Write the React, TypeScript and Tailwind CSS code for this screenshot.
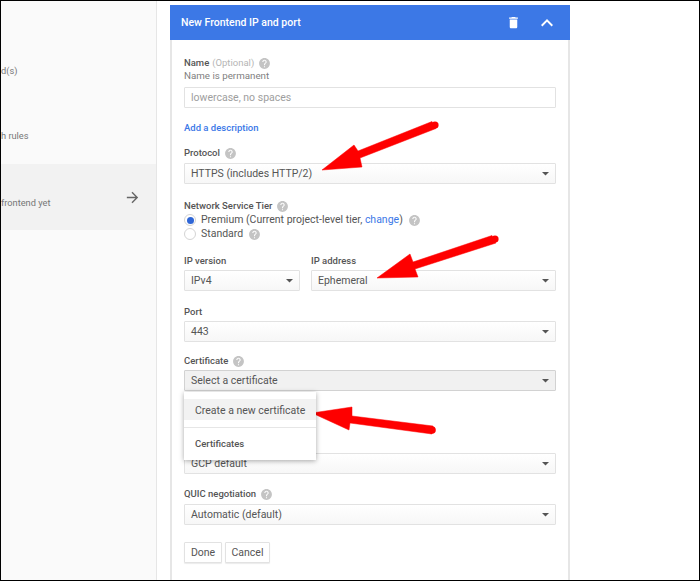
import type { ReactNode } from "react";
import { MdArrowForward, MdDelete, MdExpandLess, MdHelp } from "react-icons/md";

function Help({ className = "" }: { className?: string }) {
  return <MdHelp className={`inline-block h-[13px] w-[13px] shrink-0 text-[#c4c4c4] ${className}`} />;
}

function Label({ children, help, className = "" }: { children: ReactNode; help?: boolean; className?: string }) {
  return (
    <div className={`flex h-[14px] items-center pt-[2px] text-[9.5px] font-medium text-[#555] ${className}`}>
      {children}
      {help && <Help className="ml-[4px]" />}
    </div>
  );
}

function Select({ value, className = "", active }: { value: string; className?: string; active?: boolean }) {
  return (
    <div
      className={`flex h-[21px] items-center justify-between rounded-[1px] border pl-[6px] pr-[6px] text-[10.5px] text-[#555] ${
        active
          ? "border-[#d2d2d2] bg-[#f1f1f1]"
          : "border-[#e2e2e2] bg-gradient-to-b from-white to-[#f7f7f7]"
      } ${className}`}
    >
      <span>{value}</span>
      <svg width="7" height="4" viewBox="0 0 7 4" className="shrink-0">
        <path d="M0 0h7L3.5 3.5z" fill="#555" />
      </svg>
    </div>
  );
}

function Radio({ checked }: { checked?: boolean }) {
  return (
    <span className="mr-[5px] flex h-[12px] w-[12px] shrink-0 items-center justify-center rounded-full border border-[#d4d4d4] bg-white">
      {checked && <span className="h-[7px] w-[7px] rounded-full bg-[#2f66d6]" />}
    </span>
  );
}

function Arrows() {
  return (
    <svg width="700" height="581" className="pointer-events-none absolute -left-px -top-px">
      <g fill="#fe0000" stroke="#fe0000" strokeLinejoin="round">
        <polygon points="322,170 354,145 358,151 432,121.5 436,128.5 360,158 362,167" strokeWidth="0.5" />
        <circle cx="435" cy="125" r="3.6" strokeWidth="0" />
        <polygon points="377,278 410,254 413,262 492,235.5 496,243 415,269 418,277" strokeWidth="0.5" />
        <circle cx="495" cy="239" r="3.6" strokeWidth="0" />
        <polygon points="312,413 352,407 352,416 433,426 432,434 350,423 349,430" strokeWidth="0.5" />
        <circle cx="432" cy="430" r="3.8" strokeWidth="0" />
      </g>
    </svg>
  );
}

export default function App() {
  return (
    <div
      className="relative flex h-[581px] w-[700px] overflow-hidden border-t border-l border-b-[1.5px] border-r-[1.5px] border-black bg-white"
      style={{ fontFamily: "Roboto, 'Liberation Sans', sans-serif" }}
    >
      <aside className="flex w-[156px] shrink-0 flex-col border-r border-[#e6e6e6] bg-[#fafafa] text-[9.25px] text-[#777]">
        <div className="mt-[63px] flex h-[14px] items-center">d(s)</div>
        <div className="mt-[51px] flex h-[14px] items-center">h rules</div>
        <div className="mt-[21px] flex h-[66px] items-start justify-between bg-[#f2f2f2] pr-[15px]">
          <span className="mt-[32px] leading-[14px]">frontend yet</span>
          <MdArrowForward className="mt-[25px] h-[17px] w-[17px] text-[#666]" />
        </div>
      </aside>

      <main className="ml-[13px] mt-[4px] w-[400px] shrink-0">
        <header className="flex h-[35px] items-center justify-between bg-[#3c78e6] pl-[11px] pr-[11px] text-[10.5px] font-medium text-white">
          <span className="mt-[1px]">New Frontend IP and port</span>
          <div className="flex items-center gap-[14px]">
            <MdDelete className="h-[15px] w-[15px]" />
            <MdExpandLess className="h-[24px] w-[24px]" />
          </div>
        </header>

        <div className="h-[540px] border-x-2 border-[#e6e6e6] pl-[12px] pr-[12px] pt-[15px]">
          <Label help>
            Name <span className="ml-[3px] font-normal text-[#b5b5b5]">(Optional)</span>
          </Label>
          <div className="flex h-[14px] items-center pt-[1px] text-[9.75px] text-[#808080]">Name is permanent</div>
          <div className="mt-[4px] flex h-[21px] items-center rounded-[1px] border border-[#e2e2e2] bg-white pl-[6px] text-[10.5px] text-[#9e9e9e]">
            lowercase, no spaces
          </div>

          <div className="mt-[12px] flex h-[14px] items-center pt-[2px] text-[9.5px] font-medium text-[#3b78e7]">Add a description</div>

          <Label help className="mt-[11px]">Protocol</Label>
          <Select value="HTTPS (includes HTTP/2)" className="mt-[4px]" />

          <Label help className="mt-[14px]">Network Service Tier</Label>
          <div className="flex h-[14px] items-center pt-[2px] text-[10.5px] text-[#555]">
            <Radio checked />
            Premium (Current project-level tier,&nbsp;<span className="text-[#3b78e7]">change</span>)
            <Help className="ml-[5px]" />
          </div>
          <div className="flex h-[14px] items-center pt-[2px] text-[10.5px] text-[#555]">
            <Radio />
            Standard
            <Help className="ml-[5px]" />
          </div>

          <div className="mt-[13px] flex gap-[11px]">
            <div className="w-[116px] shrink-0">
              <Label>IP version</Label>
              <Select value="IPv4" className="mt-[3px]" />
            </div>
            <div className="flex-1">
              <Label>IP address</Label>
              <Select value="Ephemeral" className="mt-[3px]" />
            </div>
          </div>

          <Label className="mt-[13px]">Port</Label>
          <Select value="443" className="mt-[3px]" />

          <Label help className="mt-[11px]">Certificate</Label>
          <div className="relative mt-[3px]">
            <Select value="Select a certificate" active />
            <div className="absolute left-0 top-[22px] z-10 h-[68px] w-[132px] bg-white text-[9.5px] font-medium text-[#555] shadow-[0_1px_5px_rgba(0,0,0,0.35)]">
              <div className="mt-[7px] flex h-[21px] items-center bg-[#f2f2f2] pl-[11px] pt-[2px] text-[10.5px] font-normal">
                Create a new certificate
              </div>
              <div className="mt-[7px] border-t border-[#e6e6e6]" />
              <div className="mt-[8px] flex h-[14px] items-center pl-[11px] pt-[2px]">Certificates</div>
            </div>
          </div>

          <Select value="GCP default" className="mt-[62px]" />

          <Label help className="mt-[12px]">QUIC negotiation</Label>
          <Select value="Automatic (default)" className="mt-[4px]" />

          <div className="mt-[17px] flex gap-[3px]">
            <button className="h-[21px] w-[38px] rounded-[1px] border border-[#e2e2e2] bg-white text-[10.5px] text-[#555] shadow-[0_1px_1px_rgba(0,0,0,0.08)]">
              Done
            </button>
            <button className="h-[21px] w-[45px] rounded-[1px] border border-[#e2e2e2] bg-white text-[10.5px] text-[#555] shadow-[0_1px_1px_rgba(0,0,0,0.08)]">
              Cancel
            </button>
          </div>
        </div>
      </main>

      <Arrows />
    </div>
  );
}
